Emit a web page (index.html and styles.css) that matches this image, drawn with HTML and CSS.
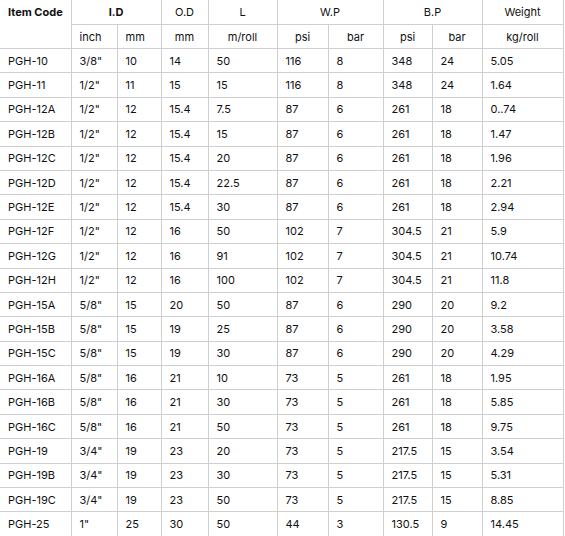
FILE: index.html
```html
<!DOCTYPE html>
<html>
<head>
<meta charset="utf-8">
<link rel="stylesheet" href="styles.css">
</head>
<body>
<table class="spec">
  <colgroup>
    <col class="c1"><col class="c2"><col class="c3"><col class="c4"><col class="c5">
    <col class="c6"><col class="c7"><col class="c8"><col class="c9"><col class="c10">
  </colgroup>
  <thead>
    <tr class="h1">
      <th rowspan="2" class="code bold">Item Code</th>
      <th colspan="2" class="bold">I.D</th>
      <th>O.D</th>
      <th>L</th>
      <th colspan="2">W.P</th>
      <th colspan="2">B.P</th>
      <th>Weight</th>
    </tr>
    <tr class="h2">
      <th class="left">inch</th>
      <th class="left">mm</th>
      <th>mm</th>
      <th>m/roll</th>
      <th>psi</th>
      <th>bar</th>
      <th>psi</th>
      <th>bar</th>
      <th>kg/roll</th>
    </tr>
  </thead>
  <tbody>
    <tr><td>PGH-10</td><td>3/8"</td><td>10</td><td>14</td><td>50</td><td>116</td><td>8</td><td>348</td><td>24</td><td>5.05</td></tr>
    <tr><td>PGH-11</td><td>1/2"</td><td>11</td><td>15</td><td>15</td><td>116</td><td>8</td><td>348</td><td>24</td><td>1.64</td></tr>
    <tr><td>PGH-12A</td><td>1/2"</td><td>12</td><td>15.4</td><td>7.5</td><td>87</td><td>6</td><td>261</td><td>18</td><td>0..74</td></tr>
    <tr><td>PGH-12B</td><td>1/2"</td><td>12</td><td>15.4</td><td>15</td><td>87</td><td>6</td><td>261</td><td>18</td><td>1.47</td></tr>
    <tr><td>PGH-12C</td><td>1/2"</td><td>12</td><td>15.4</td><td>20</td><td>87</td><td>6</td><td>261</td><td>18</td><td>1.96</td></tr>
    <tr><td>PGH-12D</td><td>1/2"</td><td>12</td><td>15.4</td><td>22.5</td><td>87</td><td>6</td><td>261</td><td>18</td><td>2.21</td></tr>
    <tr><td>PGH-12E</td><td>1/2"</td><td>12</td><td>15.4</td><td>30</td><td>87</td><td>6</td><td>261</td><td>18</td><td>2.94</td></tr>
    <tr><td>PGH-12F</td><td>1/2"</td><td>12</td><td>16</td><td>50</td><td>102</td><td>7</td><td>304.5</td><td>21</td><td>5.9</td></tr>
    <tr><td>PGH-12G</td><td>1/2"</td><td>12</td><td>16</td><td>91</td><td>102</td><td>7</td><td>304.5</td><td>21</td><td>10.74</td></tr>
    <tr><td>PGH-12H</td><td>1/2"</td><td>12</td><td>16</td><td>100</td><td>102</td><td>7</td><td>304.5</td><td>21</td><td>11.8</td></tr>
    <tr><td>PGH-15A</td><td>5/8"</td><td>15</td><td>20</td><td>50</td><td>87</td><td>6</td><td>290</td><td>20</td><td>9.2</td></tr>
    <tr><td>PGH-15B</td><td>5/8"</td><td>15</td><td>19</td><td>25</td><td>87</td><td>6</td><td>290</td><td>20</td><td>3.58</td></tr>
    <tr><td>PGH-15C</td><td>5/8"</td><td>15</td><td>19</td><td>30</td><td>87</td><td>6</td><td>290</td><td>20</td><td>4.29</td></tr>
    <tr><td>PGH-16A</td><td>5/8"</td><td>16</td><td>21</td><td>10</td><td>73</td><td>5</td><td>261</td><td>18</td><td>1.95</td></tr>
    <tr><td>PGH-16B</td><td>5/8"</td><td>16</td><td>21</td><td>30</td><td>73</td><td>5</td><td>261</td><td>18</td><td>5.85</td></tr>
    <tr><td>PGH-16C</td><td>5/8"</td><td>16</td><td>21</td><td>50</td><td>73</td><td>5</td><td>261</td><td>18</td><td>9.75</td></tr>
    <tr><td>PGH-19</td><td>3/4"</td><td>19</td><td>23</td><td>20</td><td>73</td><td>5</td><td>217.5</td><td>15</td><td>3.54</td></tr>
    <tr><td>PGH-19B</td><td>3/4"</td><td>19</td><td>23</td><td>30</td><td>73</td><td>5</td><td>217.5</td><td>15</td><td>5.31</td></tr>
    <tr><td>PGH-19C</td><td>3/4"</td><td>19</td><td>23</td><td>50</td><td>73</td><td>5</td><td>217.5</td><td>15</td><td>8.85</td></tr>
    <tr><td>PGH-25</td><td>1"</td><td>25</td><td>30</td><td>50</td><td>44</td><td>3</td><td>130.5</td><td>9</td><td>14.45</td></tr>
  </tbody>
</table>
</body>
</html>
```

FILE: styles.css
```css
html, body {
  margin: 0;
  padding: 0;
  background: #ffffff;
}

.spec {
  border-collapse: collapse;
  table-layout: fixed;
  width: 563px;
  font-family: Inter, "Noto Sans", sans-serif;
  font-size: 11px;
  color: #111111;
}

.c1 { width: 71px; }
.c2 { width: 46px; }
.c3 { width: 44px; }
.c4 { width: 47px; }
.c5 { width: 69px; }
.c6 { width: 51px; }
.c7 { width: 55px; }
.c8 { width: 49px; }
.c9 { width: 50px; }
.c10 { width: 81px; }

.spec th,
.spec td {
  border: 1px solid #cfcfcf;
  padding: 0 8px;
  height: 23px;
  line-height: 14px;
  white-space: nowrap;
  overflow: hidden;
}

.spec .h1 > th {
  height: 24px;
  border-top: none;
}

.spec tbody td {
  height: 23.4px;
  text-align: left;
  font-weight: 400;
}

.spec th {
  font-weight: 400;
  text-align: center;
}

.spec th.bold {
  font-weight: 700;
}

.spec th.left {
  text-align: left;
}

.spec th.code {
  text-align: left;
  vertical-align: top;
  padding-top: 5px;
}

.spec tr > :first-child {
  border-left: none;
}
```
